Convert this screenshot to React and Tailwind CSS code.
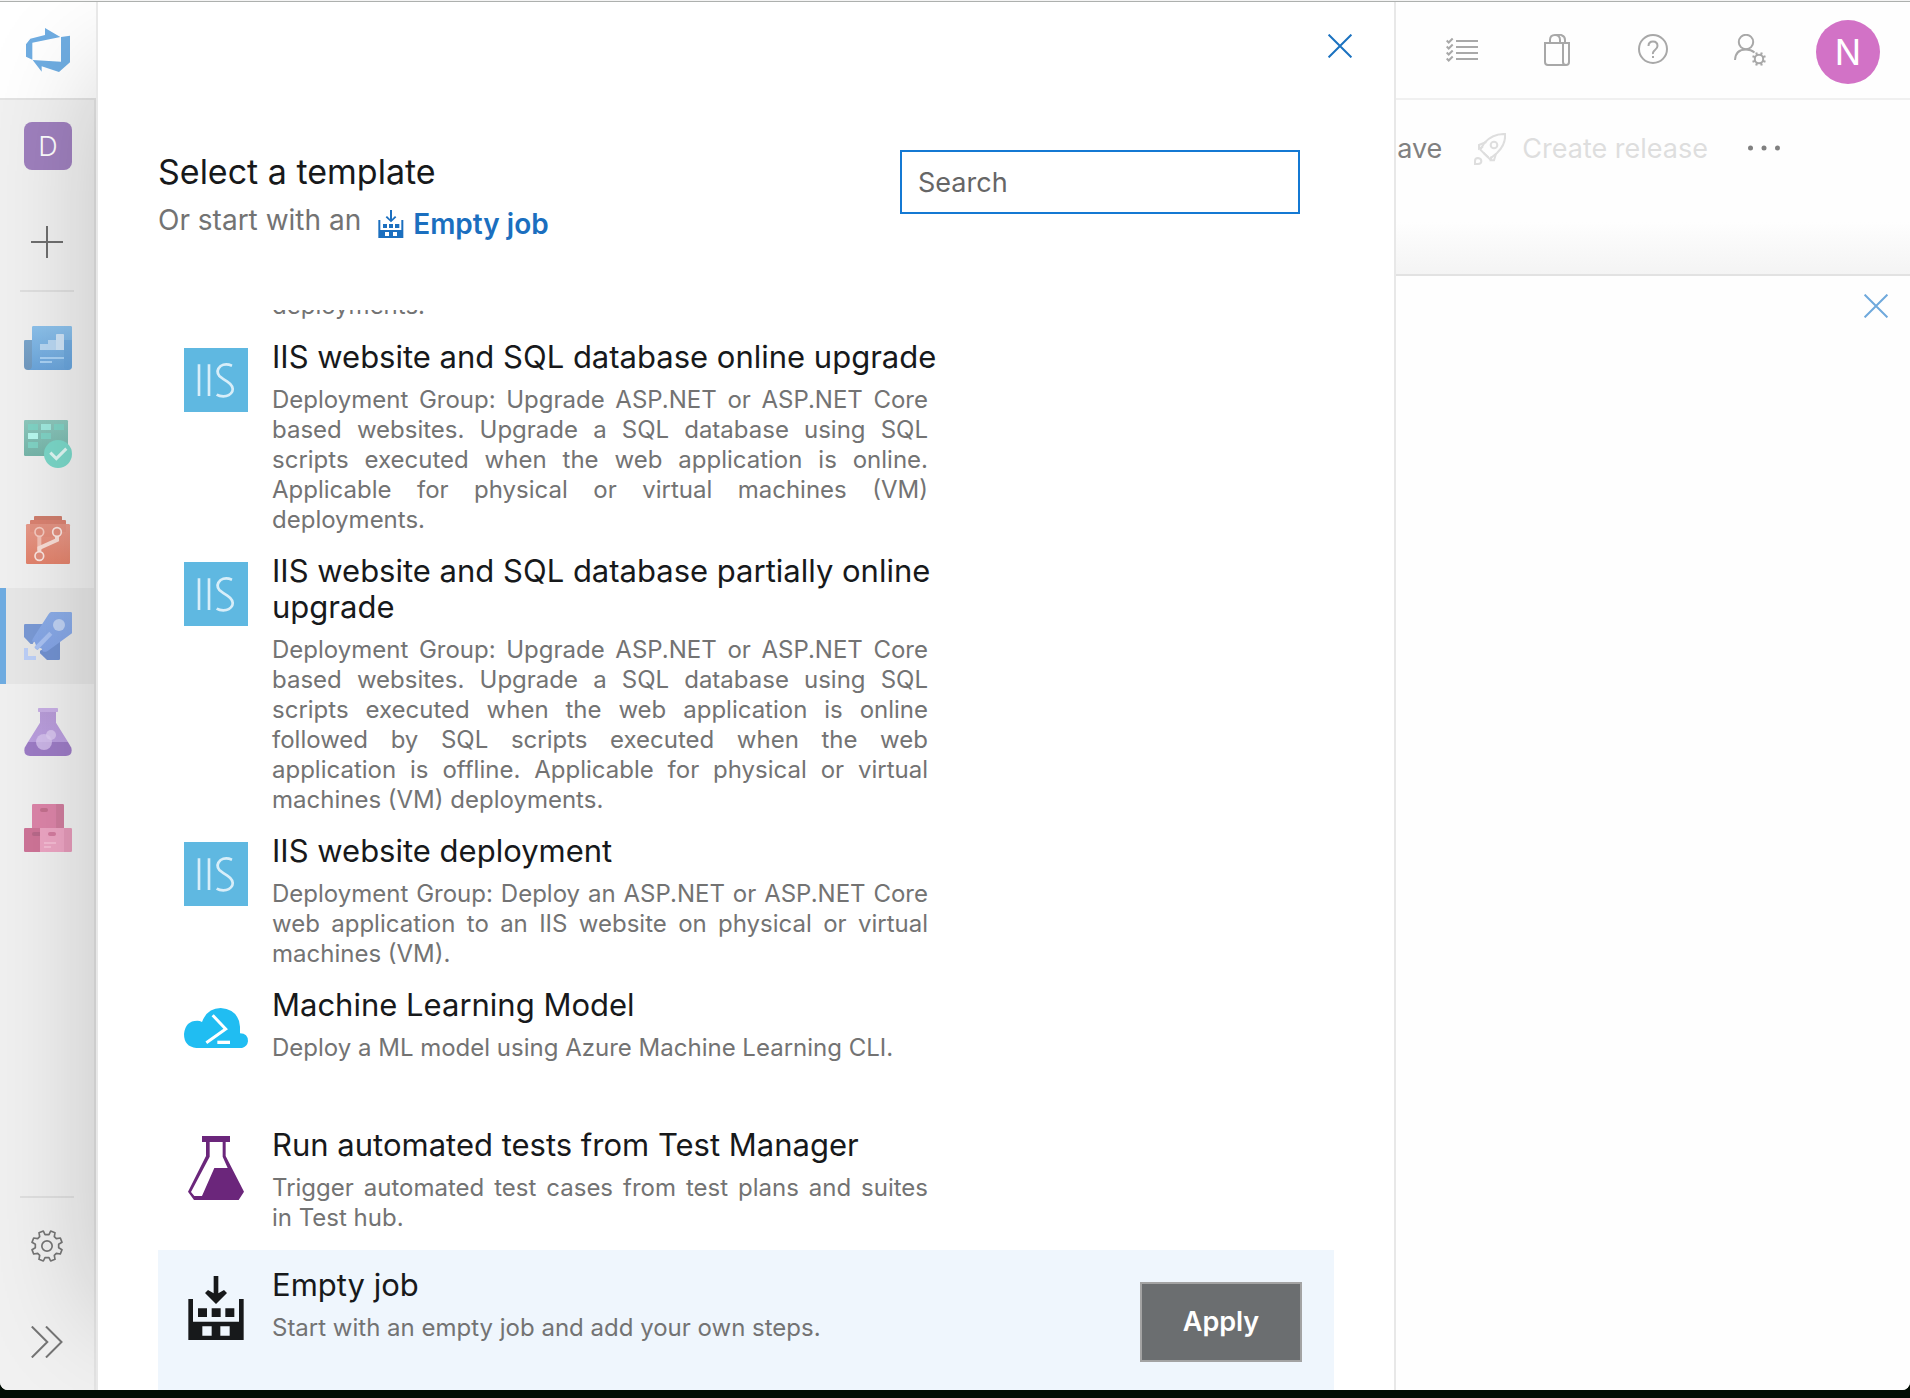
import React from "react";

const IIS = "Deployment Group: Upgrade ASP.NET or ASP.NET Core based websites. Upgrade a SQL database using SQL scripts executed when the web application is";

/* ---------- line icons ---------- */

function CloseIcon() {
  return (
    <svg viewBox="0 0 24 24" className="size-6" fill="none" stroke="currentColor" strokeWidth="2">
      <path d="M.6.6l22.8 22.8M23.4.6L.6 23.4" />
    </svg>
  );
}

function EmptyJobIcon({ className }) {
  return (
    <svg viewBox="72 885 192 192" className={className} fill="currentColor" aria-hidden="true">
      <path d="M161 885h14v52l17-10 9 9-33 33-33-33 9-9 17 10z" />
      <path fillRule="evenodd" d="M85 954h14v68h138v-68h14v123H85zM127 1036v28h28v-28zM181 1036v28h28v-28z" />
      <path d="M114 982h27v26h-27zM155 982h27v26h-27zM196 982h27v26h-27z" />
    </svg>
  );
}

function EmptyJobSmallIcon() {
  return (
    <svg viewBox="707 240 84 84" className="size-7" fill="currentColor" aria-hidden="true">
      <path d="M746 240h6v27l9-9 4 4-16 15-16-15 4-4 9 9z" />
      <path fillRule="evenodd" d="M711 270h6v30h63v-30h6v54h-75zM731 306v12h12v-12zM755 306v12h12v-12z" />
      <path d="M725 282h12v12h-12zM743 282h12v12h-12zM761 282h13v12h-13z" />
    </svg>
  );
}

function GearIcon() {
  return (
    <svg viewBox="-48 -48 96 96" className="size-8" fill="none" stroke="currentColor" strokeWidth="5" strokeLinejoin="round">
      <circle r="15.500" />
      <path d="M-6-34L-11-45L-24-40L-22-28L-28-22L-40-24L-45-11L-35-5V5L-45 11L-40 24L-28 22L-22 28L-24 40L-11 45L-6 35H6L11 45L24 40L22 28L28 22L40 24L45 11L35 5V-5L45-11L40-24L28-22L22-28L24-40L11-45L6-34Z" />
    </svg>
  );
}

/* ---------- product icons ---------- */

function DevOpsLogo() {
  return (
    <svg viewBox="78 84 132 132" className="size-11" fill="#6fade2" aria-hidden="true">
      <path d="M78 133L91 116L135 105V84L181 111L97 128V179L78 170Z" />
      <path d="M183 111L210 107V187L177 216L125 199V215L98 180L183 185Z" />
    </svg>
  );
}

function OverviewIcon() {
  return (
    <svg viewBox="72 72 144 144" className="size-12" aria-hidden="true">
      <defs>
        <linearGradient id="ov" x1="0" y1="0" x2="0" y2="1">
          <stop offset="0" stopColor="#8dc2ec" /><stop offset="1" stopColor="#6ba5dc" />
        </linearGradient>
        <linearGradient id="ovb" x1="0" y1="0" x2="0" y2="1">
          <stop offset="0" stopColor="#7ba6cb" /><stop offset="1" stopColor="#7199bf" />
        </linearGradient>
      </defs>
      <path d="M76 120H110V210H84Q72 210 72 198V124Q72 120 76 120Z" fill="url(#ovb)" />
      <path d="M100 78H212Q216 78 216 82V198Q216 210 204 210H84Q96 208 96 198V82Q96 78 100 78Z" fill="url(#ov)" />
      <path d="M192 120h24v78q0 12-12 12t-12-12z" fill="#66a2da" opacity=".5" />
      <path d="M144 120h24v30h-48v-18h24z" fill="#b9d8f3" />
      <path d="M168 104q0-2 2-2h20q2 0 2 2v46h-24z" fill="#cfe4f7" />
      <path d="M120 171h72v6h-72zM120 183h36v6h-36z" fill="#a9d2f5" />
    </svg>
  );
}

function BoardsIcon() {
  return (
    <svg viewBox="72 360 144 144" className="size-12" aria-hidden="true">
      <defs>
        <linearGradient id="bd" x1="0" y1="0" x2="0" y2="1">
          <stop offset="0" stopColor="#8dc8bd" /><stop offset="1" stopColor="#76b6aa" />
        </linearGradient>
      </defs>
      <rect x="72" y="360" width="132" height="108" rx="4" fill="url(#bd)" />
      <path d="M84 372h30v18H84zM162 372h30v18h-30zM123 399h30v18h-30zM84 426h30v18H84z" fill="#80d3c5" />
      <path d="M123 372h30v18h-30z" fill="#a0eadf" />
      <path d="M84 399h30v18H84z" fill="#b8f9ef" />
      <circle cx="174" cy="462" r="42" fill="#7bd8c9" />
      <path d="M151 458l18 18 30-30" fill="none" stroke="#e0f8f4" strokeWidth="9" />
    </svg>
  );
}

function ReposIcon() {
  return (
    <svg viewBox="72 648 144 144" className="size-12" aria-hidden="true">
      <defs>
        <linearGradient id="rp" x1="0" y1="0" x2="0" y2="1">
          <stop offset="0" stopColor="#e79a8b" /><stop offset="1" stopColor="#e3836c" />
        </linearGradient>
      </defs>
      <rect x="102" y="648" width="84" height="30" rx="3" fill="#cf7e6d" />
      <rect x="90" y="660" width="108" height="30" rx="3" fill="#da8271" />
      <rect x="78" y="672" width="132" height="120" rx="4" fill="url(#rp)" />
      <path d="M90 672h108v24h-14v14h-64v-14H90z" fill="#d57b69" opacity=".2" />
      <path d="M118 706v44" stroke="#f3bfb3" strokeWidth="12" fill="none" />
      <path d="M171 706v14l-53 24v10" stroke="#f9ded7" strokeWidth="12" fill="none" />
      <g stroke="#fbe6e1" strokeWidth="5" fill="#e28f7e">
        <circle cx="118" cy="696" r="13" stroke="#f6cbc1" /><circle cx="171" cy="696" r="13" /><circle cx="118" cy="768" r="13" />
      </g>
    </svg>
  );
}

function PipelinesIcon() {
  return (
    <svg viewBox="72 96 144 144" className="size-12" aria-hidden="true">
      <defs>
        <linearGradient id="pl" x1="0" y1="0" x2="0" y2="1">
          <stop offset="0" stopColor="#8bade8" /><stop offset="1" stopColor="#84a4e6" />
        </linearGradient>
      </defs>
      <path d="M76 132H130L98 192H92L72 171V136Q72 132 76 132Z" fill="#7a9ad6" />
      <path d="M180 184V236Q180 240 176 240H141L120 220V212Z" fill="#7292d1" />
      <path d="M154 96H212Q216 96 216 100V160L144 212Q134 218 128 214L124 205 118 204 112 210 104 203 108 196 104 186 96 184Q98 176 102 170L146 102Q150 96 154 96Z" fill="url(#pl)" />
      <path d="M148 155l9 9-44 46-10-9z" fill="#a9c2f3" />
      <circle cx="177" cy="135" r="18" fill="#bfd2f4" />
      <path d="M72 204h12v24h24v12H72z" fill="#bdd0f8" />
    </svg>
  );
}

function TestPlansIcon() {
  return (
    <svg viewBox="72 384 144 144" className="size-12" aria-hidden="true">
      <defs>
        <linearGradient id="tp" x1="0" y1="0" x2="0" y2="1">
          <stop offset="0" stopColor="#b89cd8" /><stop offset="1" stopColor="#bb9fe0" />
        </linearGradient>
      </defs>
      <path d="M120 390h48v38l36 58H84l36-58z" fill="url(#tp)" />
      <path d="M84 486H204L214 503Q219 528 198 528H90Q69 528 74 503Z" fill="#9d7cc6" />
      <rect x="114" y="384" width="60" height="12" rx="2" fill="#c9b0e6" />
      <circle cx="132" cy="486" r="24" fill="#dbc8f2" opacity=".75" />
      <circle cx="153" cy="465" r="15" fill="#dfcdf3" opacity=".75" />
    </svg>
  );
}

function ArtifactsIcon() {
  return (
    <svg viewBox="72 672 144 144" className="size-12" aria-hidden="true">
      <path d="M96 676q0-4 4-4h68v72H96z" fill="#dd85a9" />
      <path d="M168 672h20q4 0 4 4v68h-24z" fill="#d07d9e" />
      <path d="M76 744h44v72H76q-4 0-4-4v-64q0-4 4-4z" fill="#cf7598" />
      <path d="M120 744h72v72h-72z" fill="#eea6c4" />
      <path d="M192 744h20q4 0 4 4v64q0 4-4 4h-20z" fill="#e59ab9" />
      <rect x="120" y="684" width="24" height="12" rx="6" fill="#c4708f" />
      <path d="M102 756h18v12h-18q-6 0-6-6t6-6z" fill="#b9698a" />
      <rect x="144" y="756" width="24" height="12" rx="6" fill="#d57da0" />
      <path d="M132 786h36v6h-36zM132 798h21v6h-21z" fill="#f6bcd4" />
    </svg>
  );
}

/* ---------- template icons ---------- */

function IisIcon() {
  return (
    <svg viewBox="72 54 192 192" className="size-16" aria-hidden="true">
      <path d="M72 54h192v192H72z" fill="#5fb8e1" />
      <path d="M117 103v95M147 103v95M216 107Q196 99 182 108Q166 122 178 138Q186 145 202 155Q222 168 217 184Q209 199 190 199Q178 199 170 194" fill="none" stroke="#d8eef9" strokeWidth="8" />
    </svg>
  );
}

function CloudShellIcon() {
  return (
    <svg viewBox="72 48 192 192" className="size-16" aria-hidden="true">
      <path d="M109 204Q72 200 72 162Q76 122 112 122Q120 122 126 126Q142 84 182 84Q236 88 240 140V160Q264 160 264 184Q262 200 246 204Z" fill="#20bdf2" />
      <path d="M158 106l39 41-58 41" fill="none" stroke="#fff" strokeWidth="9" />
      <path d="M172 182h38v10h-38z" fill="#fff" />
    </svg>
  );
}

function FlaskIcon() {
  return (
    <svg viewBox="72 468 192 192" className="size-16" aria-hidden="true">
      <path fillRule="evenodd" d="M126 468H210V486H197V528L252 635L236 660H102L84 635L138 528V486H126ZM149 486V530L93 636L103 648H126L163 564H203L188 530V486Z" fill="#6b267b" />
    </svg>
  );
}

/* ---------- data ---------- */

const hubs = [
  ["Overview", OverviewIcon],
  ["Boards", BoardsIcon],
  ["Repos", ReposIcon],
  ["Pipelines", PipelinesIcon],
  ["Test Plans", TestPlansIcon],
  ["Artifacts", ArtifactsIcon],
];

const templates = [
  { title: "IIS website and SQL database online upgrade", Icon: IisIcon, text: IIS + " online. Applicable for physical or virtual machines (VM) deployments." },
  { title: "IIS website and SQL database partially online upgrade", Icon: IisIcon, text: IIS + " online followed by SQL scripts executed when the web application is offline. Applicable for physical or virtual machines (VM) deployments." },
  { title: "IIS website deployment", Icon: IisIcon, text: "Deployment Group: Deploy an ASP.NET or ASP.NET Core web application to an IIS website on physical or virtual machines (VM)." },
  { title: "Machine Learning Model", Icon: CloudShellIcon, text: "Deploy a ML model using Azure Machine Learning CLI." },
  { title: "Run automated tests from Test Manager", Icon: FlaskIcon, text: "Trigger automated test cases from test plans and suites in Test hub." },
  { title: "Empty job", Icon: EmptyJobIcon, text: "Start with an empty job and add your own steps.", selected: true },
];

function Template({ title, text, Icon, selected }) {
  return (
    <li className={"flex min-h-35 shrink-0 items-start gap-6 pl-[26px] pr-8 " + (selected ? "bg-[#eff6fd]" : "")}>
      <span className="mt-[26px] shrink-0 text-[#17191b]"><Icon className="size-16" /></span>
      <div className="w-[672px] pt-[17px] pb-px">
        <h2 className="text-[31px] leading-9 text-[#17191b]">{title}</h2>
        <p className="mt-2.5 mr-4 text-justify text-[24px] leading-[30px] text-[#737373]">{text}</p>
      </div>
      {selected && (
        <button className="mt-8 ml-auto h-20 w-[162px] shrink-0 border-2 border-[#a3a3a3] bg-[#6b6e70] text-[27px] font-semibold text-white">Apply</button>
      )}
    </li>
  );
}

function Sidebar() {
  return (
    <nav className="flex w-24 shrink-0 flex-col text-[#757575]">
      <a href="#home" aria-label="Azure DevOps" className="flex h-24 shrink-0 items-center justify-center bg-white"><DevOpsLogo /></a>
      <div className="flex flex-1 flex-col border-t-2 border-r-2 border-t-[#e3e3e3] border-r-[#e4e4e4] bg-[#f1f1f1]">
        <a href="#project" className="-mt-0.5 flex h-24 items-center pl-6">
          <span className="flex size-12 items-center justify-center rounded-lg bg-[#9f80be] pt-0.5 text-[27px] font-light text-white">D</span>
        </a>
        <button aria-label="New" className="flex h-24 items-center justify-center">
          <svg viewBox="0 0 32 32" className="size-8" stroke="#6f6f6f" strokeWidth="2"><path d="M16 0v32M0 16h32" /></svg>
        </button>
        <hr className="mx-5 mb-2 border-t-2 border-[#e0e0e0]" />
        {hubs.map(([name, Icon]) => (
          <a key={name} href={"#" + name} aria-label={name} className={"flex h-24 items-center " + (name === "Pipelines" ? "border-l-6 border-[#6fade2] bg-[#e8e8e8] pl-[18px]" : "pl-6")}>
            <Icon />
          </a>
        ))}
        <hr className="mx-5 mt-auto border-t-2 border-[#e0e0e0]" />
        <button aria-label="Project settings" className="flex h-24 items-center justify-center"><GearIcon /></button>
        <button aria-label="Expand" className="flex h-24 items-center justify-center">
          <svg viewBox="0 0 32 32" className="size-8" fill="none" stroke="currentColor" strokeWidth="2"><path d="M.8.5L16.300 16L.8 31.500M15 .5L30.500 16L15 31.500" /></svg>
        </button>
      </div>
    </nav>
  );
}

function TemplatePanel() {
  return (
    <section className="relative isolate z-10 flex min-w-0 flex-1">
      <div className="absolute inset-x-0 top-16 bottom-18 -z-10 shadow-[0_0_110px_rgba(0,0,0,0.2)]" />
      <div className="flex min-w-0 flex-1 flex-col border-x-2 border-[#e8e8e8] bg-white px-15">
        <div className="flex h-[148px] shrink-0 items-start justify-end pt-8">
          <button aria-label="Close" className="-mr-[18px] text-[#1b72c0]"><CloseIcon /></button>
        </div>
        <header className="flex h-40 shrink-0 items-start justify-between pr-[34px]">
          <div>
            <h1 className="text-[34px] leading-11 text-[#17191b]">Select a template</h1>
            <div className="flex items-center gap-4 pt-0.5 text-[28px] leading-10 text-[#737373]">
              <span>Or start with an</span>
              <button className="mt-2 flex items-center gap-2 font-semibold text-[#1b6fbf]"><EmptyJobSmallIcon />Empty job</button>
            </div>
          </div>
          <input aria-label="Search" placeholder="Search" className="h-16 w-[400px] border-2 border-[#1479d3] px-4 text-[27px] text-[#333] outline-none placeholder:text-[#666]" />
        </header>
        <ul className="flex min-h-0 flex-1 flex-col justify-end overflow-hidden">
          <li className="flex h-3 shrink-0 items-end overflow-hidden pb-px pl-[114px] text-[24px] leading-[30px] text-[#737373]">deployments.</li>
          {templates.map((t) => <Template key={t.title} {...t} />)}
        </ul>
      </div>
    </section>
  );
}

function SidePane() {
  return (
    <aside className="relative z-20 flex w-[514px] shrink-0 flex-col bg-[#fefefe]">
      <div className="flex h-[98px] items-center justify-end gap-[50px] border-b-2 border-[#f0f0f0] pr-[30px] text-[#a8a8a8]">
        <div className="flex items-center gap-16">
          <button aria-label="Work items">
            <svg viewBox="0 0 32 32" className="size-8" fill="none" stroke="currentColor" strokeWidth="2"><path d="M10 7h22M10 13h22M10 19h22M10 25h22" /><path strokeWidth="2" d="M.7 6.500l2 2 4-4M.7 12.500l2 2 4-4M.7 18.500l2 2 4-4M.7 24.500l2 2 4-4" /></svg>
          </button>
          <button aria-label="Marketplace">
            <svg viewBox="0 0 32 32" className="size-8" fill="none" stroke="currentColor" strokeWidth="2"><path d="M3 9h24v19q0 3-3 3H6q-3 0-3-3zM21 9v19q0 3 3 3M8 9V6q0-5 5-5t5 5v3M14 1q4-1 6 .5 3 1 3 4.500v3" /></svg>
          </button>
          <button aria-label="Help">
            <svg viewBox="0 0 32 32" className="size-8" fill="none" stroke="currentColor" strokeWidth="2"><circle cx="15" cy="15" r="14" /><path d="M10.500 12q0-4.500 4.500-4.500t4.500 4.500q0 2-2.500 4t-2 4" /><path d="M14 22h2v2h-2z" fill="currentColor" stroke="none" /></svg>
          </button>
          <button aria-label="User settings">
            <svg viewBox="0 0 32 32" className="size-8" fill="none" stroke="currentColor" strokeWidth="2"><circle cx="12" cy="8" r="7.200" /><path d="M1 26q.5-10.500 11-10.500 5 0 8.500 3" /><circle cx="25" cy="25" r="4.200" /><path strokeWidth="2.200" d="M23 21l-.8-2.500M27 21l.8-2.500M29 23l2.500-.8M29 27l2.500.8M27 29l.8 2.500M23 29l-.8 2.500M21 27l-2.500.8M21 23l-2.500-.8" /></svg>
          </button>
        </div>
        <button aria-label="Account" className="mt-1 flex size-16 items-center justify-center rounded-full bg-[#d272c6] text-[35px] text-white">N</button>
      </div>
      <div className="flex h-[174px] items-start justify-end overflow-hidden bg-linear-to-b from-[#fefefe] from-70% to-[#f4f4f4] pt-6 pr-[130px] text-[27px] leading-[50px] text-[#808080]">
        <button className="shrink-0">Save</button>
        <button disabled className="ml-8 flex shrink-0 items-center gap-4 text-[#dedede]">
          <svg viewBox="275 396 96 96" className="size-8" fill="none" stroke="currentColor" strokeWidth="6"><path d="M368 399Q371 430 344 456L322 474L294 446L306 426Q330 398 368 399Z" /><circle cx="335" cy="432" r="10" /><path d="M312 423L290 432V443L302 437M341 458L335 478H325L328 466M303 455l15 14M278 489V480Q278 471 287 471Q297 472 297 481Q297 489 287 489Z" /></svg>
          Create release
        </button>
        <button aria-label="More" className="ml-10 flex h-12 shrink-0 items-center">
          <svg viewBox="0 0 32 8" className="h-2 w-8" fill="currentColor"><circle cx="2.500" cy="4" r="2.500" /><circle cx="16" cy="4" r="2.500" /><circle cx="29.500" cy="4" r="2.500" /></svg>
        </button>
      </div>
      <div className="flex flex-1 items-start justify-end border-t-2 border-[#e2e2e2] pt-[18px] pr-[22px]">
        <button aria-label="Close details" className="text-[#6fa9dc]"><CloseIcon /></button>
      </div>
    </aside>
  );
}

export default function App() {
  return (
    <div className="flex h-screen flex-col bg-[#020d04] pb-2 font-['Inter',sans-serif]">
      <div className="h-px shrink-0 bg-[#f4f4f4]" />
      <div className="flex min-h-0 flex-1 overflow-hidden rounded-b-lg border-t border-[#adb0ae] bg-white">
        <Sidebar />
        <TemplatePanel />
        <SidePane />
      </div>
    </div>
  );
}
